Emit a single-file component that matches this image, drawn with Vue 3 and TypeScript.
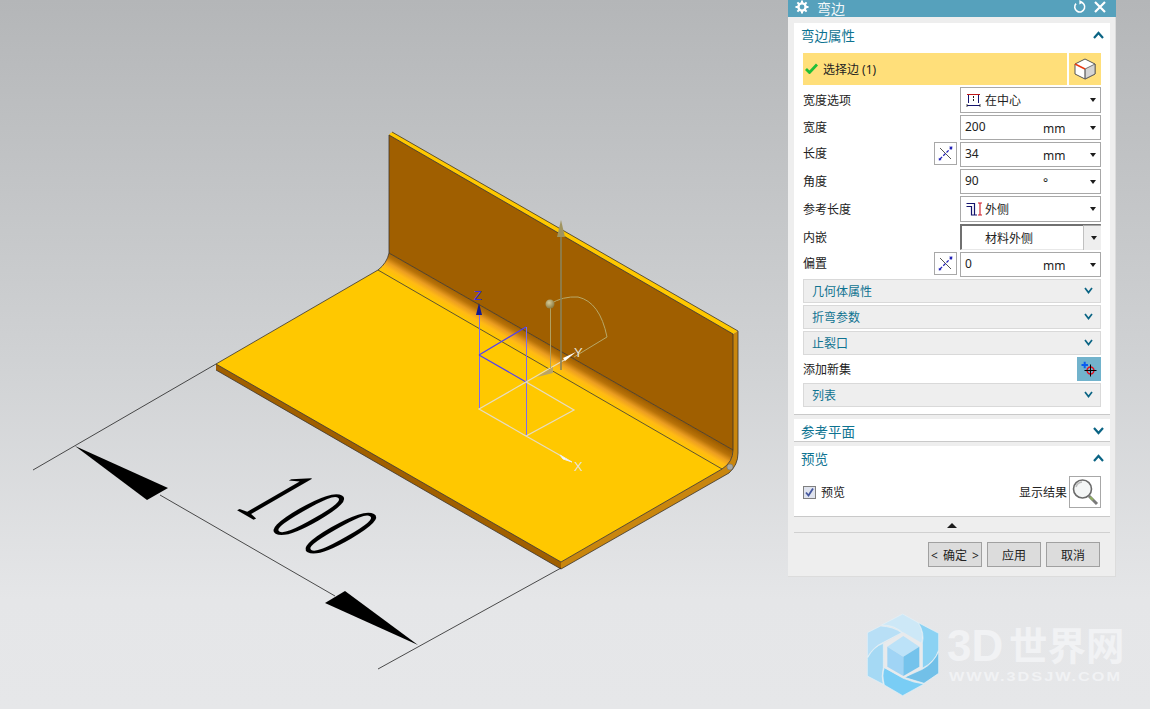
<template>
  <div class="viewport">
    <svg class="scene" width="1150" height="709" viewBox="0 0 1150 709">
      <defs>
        <linearGradient id="bend" gradientUnits="userSpaceOnUse" x1="560" y1="351" x2="549.5" y2="369">
          <stop offset="0" stop-color="#a05f00" />
          <stop offset="0.25" stop-color="#b87208" />
          <stop offset="0.5" stop-color="#eb9d20" />
          <stop offset="0.72" stop-color="#ffb915" />
          <stop offset="1" stop-color="#ffc800" />
        </linearGradient>
        <radialGradient id="ball" cx="0.4" cy="0.35" r="0.7">
          <stop offset="0" stop-color="#d8cc98" />
          <stop offset="1" stop-color="#85763c" />
        </radialGradient>
      </defs>

      <!-- sheet metal part -->
      <path d="M389 135 Q391 131 394 133 L738 331 L733 334 Z" fill="#ffc800" />
      <path d="M389 135 L733 334 L733 450 L389 253 Z" fill="#a05f00" />
      <path d="M216 364 L378 270 L722 469 L561 562 Z" fill="#ffc800" />
      <path d="M389 253 Q387 263 378 270 L722 469 Q733 462 733 450 Z" fill="url(#bend)" />
      <path d="M216 364 L561 562 L561 569 L216 370 Z" fill="#a05f00" />
      <path d="M561 562 L722 469 Q733 462 733 450 L733 334 L738 331 L738 453 Q738 465 729 473 L561 569 Z" fill="#c9860e" />
      <circle cx="730" cy="467" r="3" fill="#a8a8a0" stroke="#777" stroke-width="0.6" />
      <g class="edge">
        <path d="M389 135 L389 253" stroke-width="1.3" />
        <path d="M392 132 L738 331 L738 453 Q738 465 729 473 L561 569 L216 370" />
        <path d="M389 135 L733 334 L733 450 Q733 462 722 469" />
        <path d="M389 253 L733 450" />
        <path d="M378 270 L722 469 L561 562 L216 364 L378 270" />
        <path d="M389 253 Q387 263 378 270" />
      </g>

      <!-- dimension -->
      <g class="dim-line">
        <path d="M33 470 L216 364" />
        <path d="M378 669 L561 568" />
        <path d="M160 495 L335 596" />
      </g>
      <path d="M75 446 L168 488 L147 500 Z" fill="#000" />
      <path d="M345 591 L325 603 L418 645 Z" fill="#000" />
      <text class="dim-text" transform="matrix(0.433 0.25 -0.909 0.525 233 508)">100</text>

      <!-- csys and handles -->
      <g fill="none" stroke-width="1">
        <path d="M479.5 409 L479.5 312 M526.5 327 L526.5 436" stroke="#7a6cf0" />
        <path d="M479 355 L526 327 M479 355 L526 382" stroke="#4f40f2" stroke-width="1.2" />
        <path d="M479 409 L526 382 L574 410 L526 436 Z M526 436 L563 457 M526 382 L566 359" stroke="#e6dcc0" stroke-width="1.2" />
        <path d="M550 304 Q563 296 578 297 Q600 302 607 337 L574 357" stroke="#b8a868" />
        <path d="M550.5 304 L550.5 368" stroke="#b0a060" />
        <path d="M561 232 L561 370" stroke="#8b8358" stroke-width="1.6" />
      </g>
      <path d="M561 220 L565 237 L557 237 Z" fill="#a09460" />
      <circle cx="550" cy="304" r="4.5" fill="url(#ball)" />
      <path d="M537 377 L553 367 L553 373 Z" fill="#b9a468" />
      <path d="M479 303 L482 315 L476 315 Z" fill="#101a90" />
      <path d="M576 352 L563 358 L565 361 Z" fill="#fff" />
      <path d="M572 462 L560 455 L563 459 Z" fill="#fff" stroke="#eee" />
      <text class="axis axis-z" x="474" y="300">Z</text>
      <text class="axis axis-light" x="574" y="357">Y</text>
      <text class="axis axis-light" x="574" y="471">X</text>

      <!-- watermark -->
      <g transform="translate(850 600) scale(0.3333)">
        <g stroke="#e6f1f8" stroke-width="2">
          <path d="M95 75 L158 42 L205 68 Q225 100 213 135 L160 100 Q135 75 95 75 Z" fill="#cde8f7" />
          <path d="M205 68 L266 100 L266 150 Q255 185 217 205 L217 130 Q225 100 205 68 Z" fill="#8bd2f3" />
          <path d="M266 155 L266 220 L222 250 Q190 240 163 232 L217 208 Q250 190 266 155 Z" fill="#72c0e8" />
          <path d="M222 252 L158 287 L103 255 Q95 225 103 203 L160 235 Q190 248 222 252 Z" fill="#79cdf5" />
          <path d="M100 253 L52 228 L52 175 Q70 140 100 130 L100 203 Q93 230 100 253 Z" fill="#a5d9f4" />
          <path d="M52 172 L52 98 L92 78 Q130 80 155 98 L100 127 Q70 140 52 172 Z" fill="#b8dff6" />
        </g>
        <path d="M160 97 L217 130 L217 205 L160 235 L103 203 L103 130 Z" fill="#e8eaec" />
        <path d="M160 108 L208 140 L160 170 L112 140 Z" fill="#bce2f8" />
        <path d="M112 140 L160 170 L160 228 L112 200 Z" fill="#a0d4f5" />
        <path d="M208 140 L160 170 L160 228 L208 200 Z" fill="#75c3ec" />
      </g>
      <text class="brand brand-latin" x="947" y="661">3D</text>
      <text class="brand brand-cjk" x="1009" y="660">世界网</text>
      <text class="brand-url" x="949" y="681" textLength="173" lengthAdjust="spacingAndGlyphs">WWW.3DSJW.COM</text>
    </svg>

    <aside class="dialog">
      <header class="dialog-title">
        <svg class="title-icon" width="14" height="14" viewBox="0 0 14 14">
          <circle cx="7" cy="7" r="3.6" fill="none" stroke="#fff" stroke-width="2.4" />
          <path d="M7 .5V3M7 11v2.5M.5 7H3M11 7h2.5M2.4 2.4l1.8 1.8M9.8 9.8l1.8 1.8M2.4 11.6l1.8-1.8M9.8 4.2l1.8-1.8" stroke="#fff" stroke-width="2" />
        </svg>
        <span class="title-text">弯边</span>
        <svg class="title-action" width="14" height="14" viewBox="0 0 14 14">
          <path d="M3 3.6A5 5 0 1 0 7.4 2" fill="none" stroke="#fff" stroke-width="1.6" />
          <path d="M6.4 0 L10 2.2 L6.4 4.6 Z" fill="#fff" />
        </svg>
        <svg class="title-action" width="14" height="14" viewBox="0 0 14 14">
          <path d="M2 2 L12 12 M12 2 L2 12" stroke="#fff" stroke-width="2.2" />
        </svg>
      </header>

      <div class="dialog-body">
        <section class="group">
          <div class="group-head">
            <span>弯边属性</span>
            <svg class="chevron" width="11" height="8" viewBox="0 0 11 8"><path d="M1 7 L5.5 2 L10 7" /></svg>
          </div>
          <div class="group-content">
            <div class="select-row">
              <div class="select-edge">
                <svg width="13" height="11" viewBox="0 0 13 11">
                  <path d="M1 6 L4.5 9.5 L12 1.5" fill="none" stroke="#20bf38" stroke-width="2.8" />
                </svg>
                <span>选择边 (1)</span>
              </div>
              <div class="select-cube">
                <svg width="22" height="24" viewBox="0 0 22 24">
                  <path d="M11 2 L21 7 V17 L11 22 L1 17 V7 Z" fill="#fff" stroke="#555" stroke-width="1" />
                  <path d="M11 12 L21 7 V17 L11 22 Z" fill="#d4d4d4" stroke="#555" stroke-width="0.8" />
                  <path d="M1 7 L11 12" stroke="#e83a12" stroke-width="1.4" />
                  <path d="M11 12 V22" stroke="#666" stroke-width="0.8" />
                </svg>
              </div>
            </div>

            <div
              v-for="field in fields"
              :key="field.label"
              class="field"
              :class="{ 'field--tall': field.tall, 'field--formula': field.formula }"
            >
              <span class="field-label">{{ field.label }}</span>
              <button v-if="field.formula" class="formula-btn" type="button">
                <svg width="15" height="15" viewBox="0 0 15 15">
                  <path d="M2 2 L13 13" stroke="#555" stroke-width="1" />
                  <path d="M2 13 L13 2" stroke="#2222b8" stroke-width="1.3" stroke-dasharray="3 1.6" />
                  <path d="M.8 11.8 L3.6 14 L.8 14.4 Z M11 .8 L14.4 .4 L14 4 Z" fill="#2222b8" />
                </svg>
              </button>
              <div class="control" :class="{ 'control--inset': field.kind === 'inset' }">
                <svg v-if="field.icon === 'center'" class="control-icon" width="15" height="14" viewBox="0 0 15 14">
                  <path d="M1 1.5H14" stroke="#c01818" stroke-width="1" />
                  <path d="M2.5 2V10M12.5 2V10M1 12.5H14" stroke="#14146e" stroke-width="1" fill="none" />
                  <path d="M7.5 3V9" stroke="#222" stroke-width="1" stroke-dasharray="2 1" />
                  <path d="M1 11V14M14 11V14" stroke="#222" stroke-width="0.8" />
                </svg>
                <svg v-if="field.icon === 'outer'" class="control-icon control-icon--tight" width="17" height="14" viewBox="0 0 17 14">
                  <path d="M.5 1.5H8.5V13H11 M.5 4.5H5.5V13H8" fill="none" stroke="#14146e" stroke-width="1.2" />
                  <path d="M14 1V13M12 1H16M12 13H16" stroke="#d01c28" stroke-width="1.1" />
                </svg>
                <span class="control-value" :class="{ 'control-value--text': field.kind !== 'number' }">{{ field.value }}</span>
                <span v-if="field.unit" class="control-unit">{{ field.unit }}</span>
                <span v-if="field.kind === 'inset'" class="inset-btn"><i class="caret" /></span>
                <i v-else class="caret" />
              </div>
            </div>

            <div v-for="name in collapsedBefore" :key="name" class="fold">
              <span>{{ name }}</span>
              <svg class="chevron chevron--small" width="9" height="7" viewBox="0 0 9 7"><path d="M1 1 L4.5 5.5 L8 1" /></svg>
            </div>

            <div class="add-set">
              <span class="field-label">添加新集</span>
              <button class="add-set-btn" type="button">
                <svg width="24" height="24" viewBox="0 0 24 24">
                  <path d="M4.5 8H11M7.7 4.7V11.3" stroke="#0a5cf0" stroke-width="2" />
                  <circle cx="13.5" cy="13.5" r="3.4" fill="none" stroke="#e01020" stroke-width="1.5" />
                  <path d="M13.5 7.5V19.5M7.5 13.5H19.5" stroke="#000" stroke-width="1" />
                </svg>
              </button>
            </div>

            <div class="fold">
              <span>列表</span>
              <svg class="chevron chevron--small" width="9" height="7" viewBox="0 0 9 7"><path d="M1 1 L4.5 5.5 L8 1" /></svg>
            </div>
          </div>
        </section>

        <section class="group group--closed">
          <div class="group-head">
            <span>参考平面</span>
            <svg class="chevron" width="11" height="8" viewBox="0 0 11 8"><path d="M1 1 L5.5 6 L10 1" /></svg>
          </div>
        </section>

        <section class="group">
          <div class="group-head">
            <span>预览</span>
            <svg class="chevron" width="11" height="8" viewBox="0 0 11 8"><path d="M1 7 L5.5 2 L10 7" /></svg>
          </div>
          <div class="preview-row">
            <label class="preview-check">
              <span class="checkbox">
                <svg width="11" height="11" viewBox="0 0 11 11"><path d="M2 5.5 L4.5 8.5 L9 1.5" fill="none" stroke="#44579e" stroke-width="1.8" /></svg>
              </span>
              <span>预览</span>
            </label>
            <span class="preview-result">显示结果</span>
            <button class="magnifier" type="button">
              <svg width="30" height="30" viewBox="0 0 30 30">
                <circle cx="12.5" cy="12" r="9" fill="#f4f6f6" stroke="#6a6a6a" stroke-width="1.6" />
                <path d="M6 10 A7 7 0 0 1 12 5" fill="none" stroke="#bbb" stroke-width="1.5" />
                <path d="M19 19 L27 27" stroke="#7a7a7a" stroke-width="3" />
                <path d="M20 20 L23 23" stroke="#90b060" stroke-width="2" />
              </svg>
            </button>
          </div>
        </section>
      </div>

      <div class="more-toggle"><i class="caret caret--up" /></div>

      <footer class="dialog-footer">
        <button v-for="action in actions" :key="action" class="action-btn" type="button">{{ action }}</button>
      </footer>
    </aside>
  </div>
</template>

<script setup lang="ts">
type FieldKind = 'select' | 'number' | 'inset';

interface Field {
  label: string;
  kind: FieldKind;
  value: string;
  unit?: string;
  icon?: 'center' | 'outer';
  formula?: boolean;
  tall?: boolean;
}

const fields: Field[] = [
  { label: '宽度选项', kind: 'select', value: '在中心', icon: 'center', tall: true },
  { label: '宽度', kind: 'number', value: '200', unit: 'mm' },
  { label: '长度', kind: 'number', value: '34', unit: 'mm', formula: true },
  { label: '角度', kind: 'number', value: '90', unit: '°' },
  { label: '参考长度', kind: 'select', value: '外侧', icon: 'outer', tall: true },
  { label: '内嵌', kind: 'inset', value: '材料外侧', tall: true },
  { label: '偏置', kind: 'number', value: '0', unit: 'mm', formula: true },
];

const collapsedBefore = ['几何体属性', '折弯参数', '止裂口'];
const actions = ['< 确定 >', '应用', '取消'];
</script>

<style>
html,
body {
  margin: 0;
  overflow: hidden;
}
</style>

<style scoped>
.viewport {
  position: relative;
  width: 1150px;
  height: 709px;
  overflow: hidden;
  background: linear-gradient(180deg, #b4b6b8 0, #d0d2d4 360px, #e5e6e8 600px, #e6e7e9 709px);
  font-family: "Noto Sans", "Noto Sans CJK SC", sans-serif;
  font-size: 12px;
  color: #222;
}

.scene {
  display: block;
}

.edge path {
  fill: none;
  stroke: #3a342c;
  stroke-width: 0.8;
}

.dim-line path {
  fill: none;
  stroke: #222;
  stroke-width: 0.8;
}

.dim-text {
  font-family: "Liberation Serif", serif;
  font-size: 108px;
  letter-spacing: 20px;
  fill: #000;
}

.axis {
  font-family: "Liberation Sans", sans-serif;
  font-size: 13px;
}

.axis-z {
  fill: #3a2ce0;
}

.axis-light {
  fill: #e8e4d8;
}

.brand {
  fill: #f1f2f4;
  font-weight: 700;
}

.brand-latin {
  font-family: "Liberation Sans", sans-serif;
  font-size: 44px;
}

.brand-cjk {
  font-family: "Noto Sans CJK SC", sans-serif;
  font-size: 38.5px;
}

.brand-url {
  fill: #f1f2f4;
  font-family: "Liberation Sans", sans-serif;
  font-size: 12.5px;
  font-weight: 700;
  letter-spacing: 1.5px;
}

.dialog {
  position: absolute;
  left: 788px;
  top: 0;
  width: 328px;
  height: 577px;
  display: flex;
  flex-direction: column;
  background: #eeeeee;
  box-shadow: inset -1px -1px 0 #dcdcdc;
}

.dialog-title {
  display: flex;
  align-items: center;
  height: 17px;
  padding: 0 9px 0 7px;
  background: #56a1bc;
  color: #fff;
  overflow: hidden;
}

.title-icon {
  margin-top: -3px;
}

.title-text {
  flex: 1;
  margin-left: 8px;
  margin-top: -1px;
  font-size: 14px;
  line-height: 17px;
  opacity: 0.92;
}

.title-action {
  margin-left: 6px;
  margin-top: -3px;
}

.dialog-body {
  display: flex;
  flex-direction: column;
  gap: 4px;
  padding: 6px 6px 0;
}

.group {
  background: #fff;
  border-bottom: 1px solid #c9c9c9;
}

.group--closed {
  height: 23px;
  box-sizing: border-box;
}

.group-head {
  display: flex;
  align-items: center;
  justify-content: space-between;
  box-sizing: border-box;
  height: 26px;
  padding: 0 6px 2px 7px;
  font-size: 13.5px;
  color: #0e7391;
}

.chevron path {
  fill: none;
  stroke: #0a6484;
  stroke-width: 2.2;
}

.chevron--small path {
  stroke-width: 1.7;
}

.group-content {
  display: flex;
  flex-direction: column;
  padding: 4px 9px 5px;
}

.select-row {
  display: flex;
  gap: 2px;
  height: 32px;
  margin-bottom: 2px;
}

.select-edge {
  flex: 1;
  display: flex;
  align-items: center;
  gap: 5px;
  padding: 0 0 1px 2px;
  background: #ffdf7a;
}

.select-cube {
  width: 32px;
  display: flex;
  align-items: center;
  justify-content: center;
  background: #ffdf7a;
}

.field {
  display: flex;
  align-items: center;
  height: 25px;
  margin-bottom: 2px;
}

.field--tall {
  height: 26px;
}

.field-label {
  flex: 1;
  padding-bottom: 1px;
}

.field--formula .field-label {
  margin-top: -3px;
}

.formula-btn {
  display: flex;
  align-items: center;
  justify-content: center;
  width: 23px;
  height: 23px;
  padding: 0;
  margin-right: 3px;
  background: #fff;
  border: 1px solid #a8a8a8;
}

.field--formula .formula-btn {
  align-self: flex-start;
}

.control {
  position: relative;
  display: flex;
  align-items: center;
  box-sizing: border-box;
  width: 141px;
  height: 100%;
  padding-left: 4px;
  background: #fff;
  border: 1px solid #a8a8a8;
}

.control--inset {
  border: 1px solid #707070;
  border-top-width: 2px;
  border-left-width: 2px;
  border-right-color: #c8c8c8;
  border-bottom-color: #e8e8e8;
}

.control-icon {
  margin-left: 1px;
  margin-right: 4px;
  flex: none;
}

.control-icon--tight {
  margin-right: 2px;
}

.control-value {
  margin-top: -2px;
}

.control-value--text {
  margin-top: 0;
}

.control--inset .control-value {
  margin-left: 19px;
}

.control-unit {
  position: absolute;
  left: 82px;
  top: 50%;
  transform: translateY(-50%);
}

.caret {
  position: absolute;
  right: 4px;
  top: 50%;
  margin-top: -2px;
  width: 0;
  height: 0;
  border-left: 3.5px solid transparent;
  border-right: 3.5px solid transparent;
  border-top: 4px solid #1c1c1c;
}

.inset-btn {
  position: absolute;
  right: -1px;
  top: -1px;
  bottom: -1px;
  width: 17px;
  background: #eeeeee;
  border-left: 1px solid #c0c0c0;
  border-top: 1px solid #a8a8a8;
}

.fold {
  display: flex;
  align-items: center;
  justify-content: space-between;
  box-sizing: border-box;
  height: 24px;
  padding: 0 7px 1px 8px;
  margin-bottom: 2px;
  background: #eeeeee;
  border: 1px solid #d9d9d9;
  color: #0e7391;
}

.add-set {
  display: flex;
  align-items: center;
  height: 26px;
  margin-top: -1px;
  margin-bottom: 1px;
}

.add-set-btn {
  width: 24px;
  height: 24px;
  padding: 0;
  border: 0;
  background: #72b3cc;
}

.add-set-btn svg {
  display: block;
}

.preview-row {
  display: flex;
  align-items: center;
  padding: 4px 9px 8px;
}

.preview-check {
  display: flex;
  align-items: center;
  gap: 5px;
  flex: 1;
}

.checkbox {
  display: flex;
  align-items: center;
  justify-content: center;
  box-sizing: border-box;
  width: 13px;
  height: 13px;
  background: #dfe3ee;
  border: 1px solid #7f7f7f;
}

.preview-result {
  margin-right: 2px;
}

.magnifier {
  display: flex;
  align-items: center;
  justify-content: center;
  width: 32px;
  height: 32px;
  padding: 0;
  background: #fff;
  border: 1px solid #a8a8a8;
}

.more-toggle {
  position: relative;
  height: 15px;
  margin: 0 6px;
  border-bottom: 1px solid #d0d0d0;
}

.caret--up {
  left: 50%;
  right: auto;
  margin-left: -5px;
  margin-top: -2px;
  border-left-width: 5px;
  border-right-width: 5px;
  border-top: 0;
  border-bottom: 5px solid #1c1c1c;
}

.dialog-footer {
  display: flex;
  justify-content: flex-end;
  gap: 5px;
  padding: 9px 16px 0 0;
}

.action-btn {
  width: 54px;
  height: 25px;
  padding: 0;
  font: inherit;
  word-spacing: 2px;
  color: #222;
  background: #dcdcdc;
  border: 1px solid #a0a0a0;
}
</style>
